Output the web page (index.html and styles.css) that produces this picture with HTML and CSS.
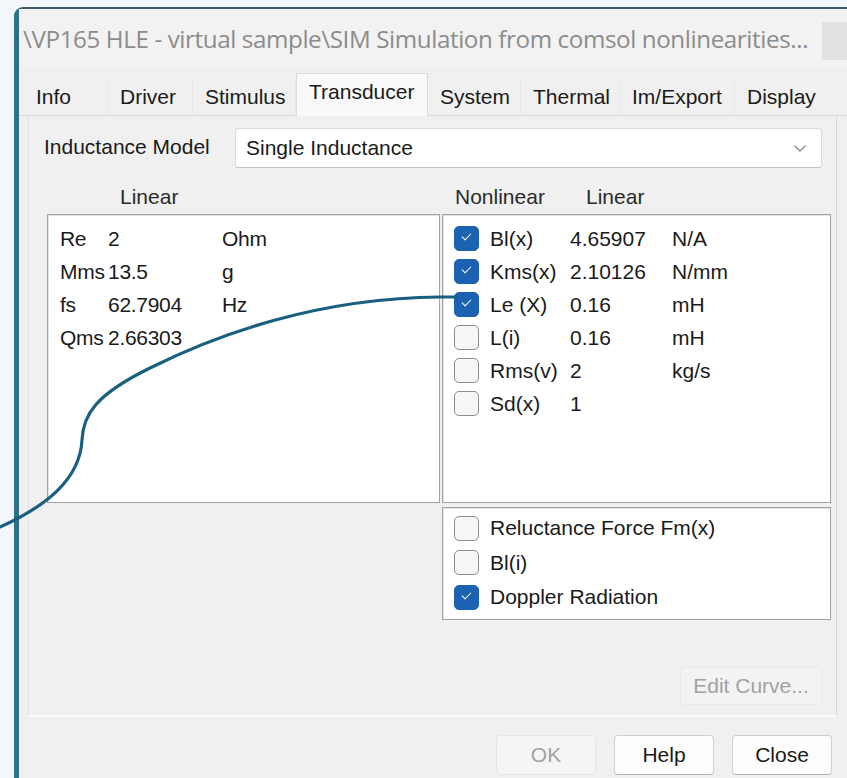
FILE: index.html
```html
<!DOCTYPE html>
<html lang="en">
<head>
<meta charset="utf-8">
<title>Simulation settings</title>
<link rel="stylesheet" href="styles.css">
</head>
<body>
<div class="window">
  <div class="titlebar">
    <span class="title">\VP165 HLE - virtual sample\SIM Simulation from comsol nonlinearities...</span>
    <span class="close-btn"></span>
  </div>

  <div class="tabs">
    <div class="tab">Info</div>
    <div class="tab">Driver</div>
    <div class="tab">Stimulus</div>
    <div class="tab active">Transducer</div>
    <div class="tab">System</div>
    <div class="tab">Thermal</div>
    <div class="tab">Im/Export</div>
    <div class="tab last">Display</div>
  </div>

  <div class="panel">
    <div class="model-row">
      <span class="model-label">Inductance Model</span>
      <div class="combo">
        <span>Single Inductance</span>
        <svg class="chev" width="14" height="10" viewBox="0 0 14 10"><path d="M1.5 2.5 L7 8 L12.5 2.5" fill="none" stroke="#8a8a8a" stroke-width="1.4"/></svg>
      </div>
    </div>

    <div class="headers">
      <div class="hdr-left">Linear</div>
      <div class="hdr-right"><span class="hdr-nl">Nonlinear</span><span>Linear</span></div>
    </div>

    <div class="boxes">
      <div class="box box-linear">
        <div class="lrow"><span>Re</span><span>2</span><span>Ohm</span></div>
        <div class="lrow"><span>Mms</span><span>13.5</span><span>g</span></div>
        <div class="lrow"><span>fs</span><span>62.7904</span><span>Hz</span></div>
        <div class="lrow"><span>Qms</span><span>2.66303</span><span></span></div>
      </div>

      <div class="box box-nonlinear">
        <div class="nrow"><span class="cb on"></span><span>Bl(x)</span><span>4.65907</span><span>N/A</span></div>
        <div class="nrow"><span class="cb on"></span><span>Kms(x)</span><span>2.10126</span><span>N/mm</span></div>
        <div class="nrow"><span class="cb on"></span><span>Le (X)</span><span>0.16</span><span>mH</span></div>
        <div class="nrow"><span class="cb"></span><span>L(i)</span><span>0.16</span><span>mH</span></div>
        <div class="nrow"><span class="cb"></span><span>Rms(v)</span><span>2</span><span>kg/s</span></div>
        <div class="nrow"><span class="cb"></span><span>Sd(x)</span><span>1</span><span></span></div>
      </div>

      <div class="box box-options">
        <div class="orow"><span class="cb"></span><span>Reluctance Force Fm(x)</span></div>
        <div class="orow"><span class="cb"></span><span>Bl(i)</span></div>
        <div class="orow"><span class="cb on"></span><span>Doppler Radiation</span></div>
      </div>
    </div>

    <div class="edit-row">
      <button class="btn disabled edit">Edit Curve...</button>
    </div>
  </div>

  <div class="footer">
    <button class="btn disabled">OK</button>
    <button class="btn">Help</button>
    <button class="btn">Close</button>
  </div>
</div>

<!-- connector drawn across the dialog to the Le (X) checkbox -->
<svg class="connector" width="847" height="778" viewBox="0 0 847 778">
  <path d="M-2 528 C 45 507 80 480 82 440 C 83 415 95 395 150 368 C 220 333 320 298 440 297 L 456 297"
        fill="none" stroke="#185f80" stroke-width="3.2" stroke-linecap="round"/>
</svg>
</body>
</html>
```

FILE: styles.css
```css
html, body {
  margin: 0;
  padding: 0;
}

body {
  width: 847px;
  height: 778px;
  overflow: hidden;
  background: #f3f6fa;
  font-family: "Liberation Sans", Arial, sans-serif;
  font-size: 21px;
  color: #1a1a1a;
  position: relative;
}

.window {
  margin: 7px 0 0 14px;
  height: 771px;
  box-sizing: border-box;
  border-left: 5px solid #2c7089;
  border-top: 2px solid #40596a;
  border-top-left-radius: 9px;
  background: #f0f0f0;
  display: flex;
  flex-direction: column;
}

/* title bar */
.titlebar {
  height: 59px;
  display: flex;
  align-items: center;
  padding-left: 4px;
  background: #f2f2f2;
}

.title {
  flex: 1;
  font-family: "Open Sans", "Noto Sans", sans-serif;
  font-size: 24.2px;
  color: #8c8c8c;
  white-space: nowrap;
  overflow: hidden;
  letter-spacing: -0.4px;
}

.close-btn {
  width: 25px;
  height: 38px;
  margin-top: 5px;
  background: #e1e1e1;
}

/* tab strip */
.tabs {
  display: grid;
  grid-template-columns: 84px 85px 103px 132px 93px 99px 115px 1fr;
  align-items: end;
  margin-top: 5px;
  height: 42px;
  padding-left: 5px;
  border-bottom: 1px solid #dadada;
}

.tab {
  height: 37px;
  box-sizing: border-box;
  padding: 7px 0 0 12px;
  border-right: 1px solid #e8e8e8;
  white-space: nowrap;
}

.tab.last {
  border-right: none;
}

.tab.active {
  height: 43px;
  margin-bottom: -1px;
  padding-top: 6px;
  background: #f9f9f9;
  border: 1px solid #dcdcdc;
  border-bottom: none;
}

/* tab page */
.panel {
  margin-left: 9px;
  width: 809px;
  height: 601px;
  box-sizing: border-box;
  border-left: 1px solid #e2e2e2;
  border-right: 1px solid #d8d8d8;
  border-bottom: 2px solid #fbfbfb;
}

.model-row {
  display: flex;
  align-items: center;
  margin: 12px 0 0 15px;
  height: 40px;
}

.model-label {
  width: 191px;
  margin-top: -2px;
}

.combo {
  width: 587px;
  height: 40px;
  box-sizing: border-box;
  background: #fff;
  border: 1px solid #dadada;
  border-bottom-color: #c4c4c4;
  border-radius: 3px;
  display: flex;
  align-items: center;
  justify-content: space-between;
  padding: 0 14px 0 10px;
}

.headers {
  display: grid;
  grid-template-columns: 395px 389px;
  margin: 18px 0 0 18px;
  height: 22px;
  line-height: 22px;
  color: #2a2a2a;
}

.hdr-left {
  padding-left: 73px;
}

.hdr-right {
  padding-left: 13px;
}

.hdr-nl {
  display: inline-block;
  width: 131px;
}

.boxes {
  display: grid;
  grid-template-columns: 393px 389px;
  grid-template-rows: 289px 113px;
  column-gap: 2px;
  row-gap: 4px;
  margin: 6px 0 0 18px;
}

.box {
  background: #fff;
  border: 1px solid #a3a3a3;
  box-shadow: inset 1px 1px 0 #e3e3e3;
  box-sizing: border-box;
}

.box-linear {
  grid-row: 1;
  grid-column: 1;
  padding: 7px 0 0 12px;
}

.box-nonlinear {
  grid-row: 1;
  grid-column: 2;
  padding: 7px 0 0 11px;
}

.box-options {
  grid-row: 2;
  grid-column: 2;
  padding: 3px 0 0 11px;
}

.lrow {
  display: grid;
  grid-template-columns: 48px 114px auto;
  height: 33px;
  align-items: center;
  letter-spacing: -0.3px;
}

.nrow {
  display: grid;
  grid-template-columns: 36px 80px 102px auto;
  height: 33px;
  align-items: center;
}

.orow {
  display: flex;
  align-items: center;
  height: 34.5px;
}

.orow .cb {
  margin-right: 11px;
}

/* checkboxes */
.cb {
  width: 25px;
  height: 25px;
  box-sizing: border-box;
  border: 1.5px solid #8d8d8d;
  border-radius: 5px;
  background: #f6f6f6;
  position: relative;
}

.cb.on {
  background: #1b62b3;
  border-color: #1b62b3;
}

.cb.on::after {
  content: "";
  position: absolute;
  left: 7px;
  top: 6px;
  width: 8px;
  height: 4px;
  border-left: 1.4px solid #fff;
  border-bottom: 1.4px solid #fff;
  transform: rotate(-45deg);
}

/* buttons */
.btn {
  font-family: "Liberation Sans", Arial, sans-serif;
  font-size: 21px;
  color: #1a1a1a;
  background: #fdfdfd;
  border: 1px solid #cfcfcf;
  border-bottom-color: #b3b3b3;
  border-radius: 4px;
  width: 100px;
  height: 40px;
  padding: 0;
}

.btn.disabled {
  color: #a2a2a2;
  background: #f5f5f5;
  border-color: #e6e6e6;
}

.edit-row {
  display: flex;
  justify-content: flex-end;
  margin: 47px 14px 0 0;
}

.btn.edit {
  width: 142px;
  height: 38px;
  background: #f3f3f3;
  border-color: #e8e8e8;
}

.footer {
  display: flex;
  justify-content: flex-end;
  gap: 18px;
  margin: 18px 15px 0 0;
}

.connector {
  position: absolute;
  left: 0;
  top: 0;
  pointer-events: none;
}
```
